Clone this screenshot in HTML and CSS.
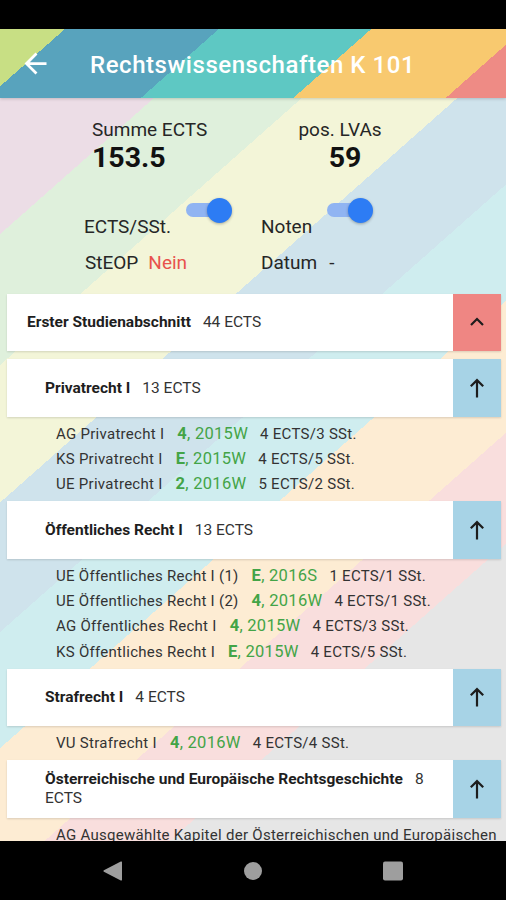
FILE: index.html
```html
<!DOCTYPE html>
<html lang="de">
<head>
<meta charset="utf-8">
<title>Rechtswissenschaften K 101</title>
<link rel="stylesheet" href="styles.css">
</head>
<body>
<div class="phone">
  <div class="statusbar"></div>
  <header class="appbar">
    <svg class="back" viewBox="0 0 24 24"><path d="M20 11H7.83l5.59-5.59L12 4l-8 8 8 8 1.41-1.41L7.83 13H20v-2z"/></svg>
    <h1 class="title">Rechtswissenschaften K 101</h1>
  </header>
  <main class="content">
    <section class="summary">
      <div class="stats">
        <div class="stat">
          <div class="stat-label">Summe ECTS</div>
          <div class="stat-value">153.5</div>
        </div>
        <div class="stat stat-right">
          <div class="stat-label">pos. LVAs</div>
          <div class="stat-value">59</div>
        </div>
      </div>
      <div class="toggles">
        <div class="toggle-item">
          <span class="toggle-label">ECTS/SSt.</span>
          <span class="switch"><span class="track"></span><span class="knob"></span></span>
        </div>
        <div class="toggle-item">
          <span class="toggle-label">Noten</span>
          <span class="switch"><span class="track"></span><span class="knob"></span></span>
        </div>
      </div>
      <div class="info">
        <div class="info-item"><span>StEOP</span><span class="info-val red">Nein</span></div>
        <div class="info-item"><span>Datum</span><span class="info-val dash">-</span></div>
      </div>
    </section>

    <div class="list">
      <div class="card">
        <div class="card-body"><p><span class="card-name">Erster Studienabschnitt</span><span class="card-ects">44 ECTS</span></p></div>
        <div class="card-btn btn-red">
          <svg viewBox="0 0 24 24"><polyline points="6,15 12,9 18,15"/></svg>
        </div>
      </div>

      <div class="card sub">
        <div class="card-body"><p><span class="card-name">Privatrecht I</span><span class="card-ects">13 ECTS</span></p></div>
        <div class="card-btn btn-blue">
          <svg viewBox="0 0 24 24"><path d="M12 21.5V4.5M5.8 10.3L12 4.1l6.2 6.2"/></svg>
        </div>
      </div>
      <ul class="courses">
        <li>AG Privatrecht I<span class="grade"><b>4</b>, 2015W</span><span class="ects">4 ECTS/3 SSt.</span></li>
        <li>KS Privatrecht I<span class="grade"><b>E</b>, 2015W</span><span class="ects">4 ECTS/5 SSt.</span></li>
        <li>UE Privatrecht I<span class="grade"><b>2</b>, 2016W</span><span class="ects">5 ECTS/2 SSt.</span></li>
      </ul>

      <div class="card sub">
        <div class="card-body"><p><span class="card-name">Öffentliches Recht I</span><span class="card-ects">13 ECTS</span></p></div>
        <div class="card-btn btn-blue">
          <svg viewBox="0 0 24 24"><path d="M12 21.5V4.5M5.8 10.3L12 4.1l6.2 6.2"/></svg>
        </div>
      </div>
      <ul class="courses">
        <li>UE Öffentliches Recht I (1)<span class="grade"><b>E</b>, 2016S</span><span class="ects">1 ECTS/1 SSt.</span></li>
        <li>UE Öffentliches Recht I (2)<span class="grade"><b>4</b>, 2016W</span><span class="ects">4 ECTS/1 SSt.</span></li>
        <li>AG Öffentliches Recht I<span class="grade"><b>4</b>, 2015W</span><span class="ects">4 ECTS/3 SSt.</span></li>
        <li>KS Öffentliches Recht I<span class="grade"><b>E</b>, 2015W</span><span class="ects">4 ECTS/5 SSt.</span></li>
      </ul>

      <div class="card sub">
        <div class="card-body"><p><span class="card-name">Strafrecht I</span><span class="card-ects">4 ECTS</span></p></div>
        <div class="card-btn btn-blue">
          <svg viewBox="0 0 24 24"><path d="M12 21.5V4.5M5.8 10.3L12 4.1l6.2 6.2"/></svg>
        </div>
      </div>
      <ul class="courses">
        <li>VU Strafrecht I<span class="grade"><b>4</b>, 2016W</span><span class="ects">4 ECTS/4 SSt.</span></li>
      </ul>

      <div class="card sub">
        <div class="card-body"><p><span class="card-name">Österreichische und Europäische Rechtsgeschichte</span><span class="card-ects">8 ECTS</span></p></div>
        <div class="card-btn btn-blue">
          <svg viewBox="0 0 24 24"><path d="M12 21.5V4.5M5.8 10.3L12 4.1l6.2 6.2"/></svg>
        </div>
      </div>
      <ul class="courses last">
        <li>AG Ausgewählte Kapitel der Österreichischen und Europäischen Rechtsgeschichte</li>
      </ul>
    </div>
  </main>
  <nav class="navbar">
    <svg class="nav-icon" viewBox="0 0 24 24"><path d="M21 3.2v17.6a.8.8 0 0 1-1.2.7L2.9 12.7a.8.8 0 0 1 0-1.4l16.9-8.8a.8.8 0 0 1 1.2.7z"/></svg>
    <svg class="nav-icon" viewBox="0 0 24 24"><circle cx="12" cy="12" r="9"/></svg>
    <svg class="nav-icon" viewBox="0 0 24 24"><rect x="2" y="2.5" width="20" height="19" rx="2"/></svg>
  </nav>
</div>
</body>
</html>
```

FILE: styles.css
```css
* {
  box-sizing: border-box;
  margin: 0;
  padding: 0;
}

html,
body {
  width: 506px;
  height: 900px;
  overflow: hidden;
}

body {
  font-family: Roboto, "Noto Sans", "Liberation Sans", sans-serif;
  background: #000;
  color: #222;
}

.phone {
  display: flex;
  flex-direction: column;
  height: 900px;
}

.statusbar {
  flex: none;
  height: 29px;
  background: #000;
}

/* ---------- app bar ---------- */
.appbar {
  flex: none;
  height: 69px;
  display: flex;
  align-items: center;
  position: relative;
  z-index: 1;
  background: linear-gradient(138.5deg,
    #c8df84 0 43px,
    #58a3bd 43px 145px,
    #5ec8c3 145px 246px,
    #f8c96f 246px 347px,
    #ee8b85 347px);
  box-shadow: 0 1px 3px rgba(0, 0, 0, 0.18);
}

.back {
  width: 33px;
  height: 33px;
  margin-left: 18.5px;
  fill: #fff;
}

.title {
  margin-left: 38.5px;
  margin-top: 2px;
  font-size: 24px;
  font-weight: 500;
  letter-spacing: 0.55px;
  color: #fff;
  line-height: 28px;
}

/* ---------- content ---------- */
.content {
  flex: none;
  height: 743px;
  overflow: hidden;
  background: linear-gradient(138.5deg,
    #ecdde6 0 102px,
    #dff0dc 102px 200px,
    #f3f5d8 200px 303px,
    #cfe3ec 303px 400px,
    #cfedef 400px 487px,
    #fdecd3 487px 586px,
    #f9dedd 586px 669px,
    #e6e6e6 669px);
}

.summary {
  padding: 21px 0 19.5px;
}

.stats {
  display: grid;
  grid-template-columns: 200px 96px;
  padding-left: 92px;
}

.stat-label {
  font-size: 19px;
  line-height: 22px;
  color: #262626;
}

.stat-value {
  margin-top: 2px;
  font-size: 28.5px;
  font-weight: 700;
  line-height: 30px;
  color: #111;
}

.stat-right {
  text-align: center;
}

.stat-right .stat-value {
  padding-left: 10px;
}

.toggles {
  display: grid;
  grid-template-columns: 177px auto;
  padding-left: 84px;
  margin-top: 24.5px;
}

.toggle-item {
  display: flex;
  align-items: flex-start;
}

.toggle-label {
  margin-top: 18.5px;
  font-size: 19px;
  line-height: 22px;
  color: #262626;
}

.switch {
  position: relative;
  width: 46px;
  height: 25px;
  margin-left: 15px;
}

.track {
  position: absolute;
  left: 0;
  top: 5.5px;
  width: 39px;
  height: 14px;
  border-radius: 7px;
  background: #90b4f2;
}

.knob {
  position: absolute;
  right: 0;
  top: 0;
  width: 25px;
  height: 25px;
  border-radius: 50%;
  background: #2d7cf4;
  box-shadow: 0 1px 3px rgba(0, 0, 0, 0.3);
}

.info {
  display: grid;
  grid-template-columns: 176px auto;
  padding-left: 85px;
  margin-top: 14px;
}

.info-item {
  display: flex;
  font-size: 19px;
  line-height: 22px;
  color: #262626;
}

.info-val {
  margin-left: 10px;
}

.info-val.dash {
  margin-left: 12px;
}

.red {
  color: #e8524c;
}

/* ---------- list ---------- */
.list {
  padding: 0 5px 0 7px;
}

.card {
  display: flex;
  min-height: 57.5px;
  background: #fff;
  box-shadow: 0 1px 2px rgba(0, 0, 0, 0.14);
}

.card + .card {
  margin-top: 8px;
}

.card-body {
  flex: 1;
  display: flex;
  align-items: center;
  padding: 0 12px 0 20px;
  font-size: 15.5px;
  line-height: 18.5px;
}

.card.sub .card-body {
  padding-left: 38px;
}

.card-name {
  font-weight: 700;
  color: #1e1e1e;
}

.card-ects {
  margin-left: 12px;
  color: #333;
}

.card-btn {
  flex: none;
  width: 48px;
  display: flex;
  align-items: center;
  justify-content: center;
}

.card-btn svg {
  width: 24px;
  height: 24px;
  fill: none;
  stroke: #1d1d1d;
  stroke-width: 2.2;
}

.btn-red {
  background: #ef8683;
}

.btn-blue {
  background: #a7d3e6;
}

.courses {
  list-style: none;
  padding: 5px 0 3.5px 49px;
  font-size: 15px;
  line-height: 25.4px;
  letter-spacing: 0.28px;
  color: #333;
}

.courses li {
  height: 25.4px;
  white-space: nowrap;
}

.courses.last {
  margin-right: -5px;
}

.courses.last li {
  height: auto;
  white-space: normal;
}

.grade {
  margin-left: 13px;
  font-size: 16.5px;
  line-height: 18px;
  color: #43a447;
}

.grade b {
  font-weight: 700;
}

.ects {
  margin-left: 12px;
}

/* ---------- nav bar ---------- */
.navbar {
  flex: none;
  height: 59px;
  display: flex;
  align-items: center;
  justify-content: center;
  gap: 116px;
  background: #000;
}

.nav-icon {
  width: 24px;
  height: 24px;
  fill: #9e9e9e;
}
```
